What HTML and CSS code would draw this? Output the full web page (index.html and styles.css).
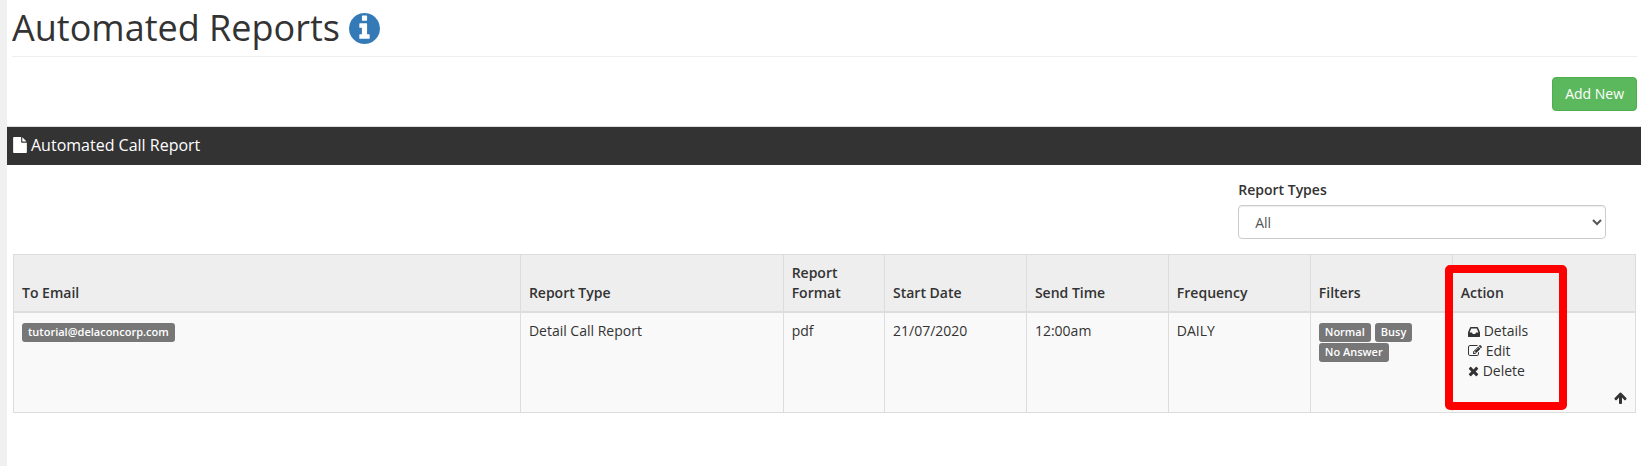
FILE: index.html
```html
<!DOCTYPE html>
<html lang="en">
<head>
    <meta charset="UTF-8">
    <meta name="viewport" content="width=device-width, initial-scale=1.0">
    <title>Automated Reports</title>
    <link rel="stylesheet" href="styles.css">
</head>
<body>
    <main class="page">
        <div class="page-header">
            <h1>Automated Reports</h1>
            <a href="#" class="info-link" aria-label="Help">
                <svg class="icon-info" viewBox="0 128 1536 1536"><path d="M1024 1376v-160q0-14-9-23t-23-9h-96v-512q0-14-9-23t-23-9h-320q-14 0-23 9t-9 23v160q0 14 9 23t23 9h96v320h-96q-14 0-23 9t-9 23v160q0 14 9 23t23 9h448q14 0 23-9t9-23zm-128-896v-192q0-14-9-23t-23-9h-192q-14 0-23 9t-9 23v192q0 14 9 23t23 9h192q14 0 23-9t9-23zm640 416q0 209-103 385.5t-279.5 279.5-385.5 103-385.5-103-279.5-279.5-103-385.5 103-385.5 279.5-279.5 385.5-103 385.5 103 279.5 279.5 103 385.5z"/></svg>
            </a>
        </div>

        <div class="toolbar">
            <button type="button" class="btn-add">Add New</button>
        </div>

        <h2 class="panel-heading">
            <svg class="icon-file" viewBox="0 0 1536 1792"><path d="M1024 512v-472q22 14 36 28l408 408q14 14 28 36h-472zm-128 32q0 40 28 68t68 28h544v1056q0 40-28 68t-68 28h-1344q-40 0-68-28t-28-68v-1600q0-40 28-68t68-28h800v544z"/></svg>
            Automated Call Report
        </h2>

        <div class="filter-bar">
            <div class="form-group">
                <label for="report-types">Report Types</label>
                <select id="report-types" class="form-control">
                    <option>All</option>
                </select>
            </div>
        </div>

        <div class="table-wrap">
            <table class="report-table">
                <colgroup>
                    <col class="col-email">
                    <col class="col-type">
                    <col class="col-format">
                    <col class="col-small">
                    <col class="col-small">
                    <col class="col-small">
                    <col class="col-small">
                    <col>
                </colgroup>
                <thead>
                    <tr>
                        <th>To Email</th>
                        <th>Report Type</th>
                        <th>Report Format</th>
                        <th>Start Date</th>
                        <th>Send Time</th>
                        <th>Frequency</th>
                        <th>Filters</th>
                        <th>Action</th>
                    </tr>
                </thead>
                <tbody>
                    <tr>
                        <td>
                            <div class="tags"><span class="tag">tutorial@delaconcorp.com</span></div>
                        </td>
                        <td>Detail Call Report</td>
                        <td>pdf</td>
                        <td>21/07/2020</td>
                        <td>12:00am</td>
                        <td>DAILY</td>
                        <td>
                            <div class="tags">
                                <span class="tag">Normal</span>
                                <span class="tag">Busy</span>
                                <span class="tag">No Answer</span>
                            </div>
                        </td>
                        <td class="action-cell">
                            <ul class="actions">
                                <li><a href="#"><svg class="icon icon-inbox" viewBox="0 128 1536 1536"><path d="M1023 1088h316q-1-3-2.5-8.5t-2.5-7.5l-212-496h-708l-212 496q-1 3-2.5 8.5t-2.5 7.5h316l95 192h320zm513 30v482q0 26-19 45t-45 19h-1408q-26 0-45-19t-19-45v-482q0-62 25-123l238-552q10-25 36.5-42t52.5-17h832q26 0 52.5 17t36.5 42l238 552q25 61 25 123z"/></svg>Details</a></li>
                                <li><a href="#"><svg class="icon icon-edit" viewBox="0 0 1792 1792"><path d="M888 1184l116-116-152-152-116 116v56h96v96h56zm440-720q-16-16-33 1l-350 350q-17 17-1 33t33-1l350-350q17-17 1-33zm80 594v190q0 119-84.5 203.5t-203.5 84.5h-832q-119 0-203.5-84.5t-84.5-203.5v-832q0-119 84.5-203.5t203.5-84.5h832q63 0 117 25 15 7 18 23 3 17-9 29l-49 49q-14 14-32 8-23-6-45-6h-832q-66 0-113 47t-47 113v832q0 66 47 113t113 47h832q66 0 113-47t47-113v-126q0-13 9-22l64-64q15-15 35-7t20 29zm-96-738l288 288-672 672h-288v-288zm444 132l-92 92-288-288 92-92q28-28 68-28t68 28l152 152q28 28 28 68t-28 68z"/></svg>Edit</a></li>
                                <li><a href="#"><svg class="icon icon-times" viewBox="192 192 1408 1408"><path d="M1490 1322q0 40-28 68l-136 136q-28 28-68 28t-68-28l-294-294-294 294q-28 28-68 28t-68-28l-136-136q-28-28-28-68t28-68l294-294-294-294q-28-28-28-68t28-68l136-136q28-28 68-28t68 28l294 294 294-294q28-28 68-28t68 28l136 136q28 28 28 68t-28 68l-294 294 294 294q28 28 28 68z"/></svg>Delete</a></li>
                            </ul>
                            <div class="back-top">
                                <a href="#" aria-label="Back to top"><svg class="icon-up" viewBox="64 128 1664 1536"><path d="M1675 971q0 51-37 90l-75 75q-38 38-91 38-54 0-90-38l-294-293v704q0 52-37.5 84.5t-90.5 32.5h-128q-53 0-90.5-32.5t-37.5-84.5v-704l-294 293q-36 38-90 38t-90-38l-75-75q-38-38-38-90 0-53 38-91l651-651q35-37 90-37 54 0 91 37l651 651q37 39 37 91z"/></svg></a>
                            </div>
                            <div class="highlight"></div>
                        </td>
                    </tr>
                </tbody>
            </table>
        </div>
    </main>
</body>
</html>
```
FILE: styles.css
```css
* {
    box-sizing: border-box;
}
body {
    margin: 0;
    font-family: "Open Sans", Arial, sans-serif;
    font-size: 14px;
    line-height: 20px;
    color: #333;
    background-color: #fff;
}
svg {
    display: block;
    fill: currentColor;
}
a {
    color: #333;
    text-decoration: none;
}
.page {
    min-height: 100vh;
    border-left: 7px solid #f0f0f0;
}
.page-header {
    display: flex;
    align-items: center;
    gap: 9px;
    margin: 0 4px 0 5px;
    padding-bottom: 8px;
    border-bottom: 1px solid #eee;
}
h1 {
    margin: 0;
    padding-top: 8px;
    font-size: 36px;
    font-weight: 400;
    line-height: 40px;
}
.info-link {
    padding-top: 8px;
    color: #337ab7;
}
.icon-info {
    width: 31px;
    height: 31px;
}
.toolbar {
    display: flex;
    justify-content: flex-end;
    padding: 20px 4px 15px;
}
.btn-add {
    padding: 6px 12px;
    border: 1px solid #4cae4c;
    border-radius: 4px;
    background-color: #5cb85c;
    color: #fff;
    font: inherit;
    cursor: pointer;
}
.panel-heading {
    display: flex;
    align-items: center;
    gap: 4px;
    margin: 0;
    padding: 8px 6px 10px;
    border-top: 1px solid #ddd;
    background-color: #333;
    color: #fff;
    font-size: 16px;
    font-weight: 400;
    line-height: 20px;
}
.icon-file {
    width: 14px;
    height: 16px;
}

/* filter */
.filter-bar {
    display: flex;
    justify-content: flex-end;
    padding: 15px 35px 15px 0;
}
.form-group {
    width: 23%;
}
.form-group label {
    display: block;
    margin-bottom: 5px;
    font-weight: 600;
}
.form-control {
    display: block;
    width: 100%;
    height: 34px;
    padding: 6px 12px;
    border: 1px solid #ccc;
    border-radius: 4px;
    background-color: #fff;
    box-shadow: inset 0 1px 1px rgba(0, 0, 0, 0.075);
    color: #555;
    font: inherit;
}

/* table */
.table-wrap {
    padding: 0 5px 0 6px;
}
.report-table {
    width: 100%;
    table-layout: fixed;
    border-collapse: collapse;
    border: 1px solid #ddd;
}
.col-email {
    width: 31.25%;
}
.col-type {
    width: 16.2%;
}
.col-format {
    width: 6.25%;
}
.col-small {
    width: 8.75%;
}
th, td {
    padding: 8px;
    border: 1px solid #ddd;
    text-align: left;
    vertical-align: top;
}
th {
    border-bottom-width: 2px;
    background-color: #eee;
    font-weight: 600;
    vertical-align: bottom;
}
td {
    background-color: #f9f9f9;
}
.tags {
    display: flex;
    flex-wrap: wrap;
    gap: 1px 4px;
    padding-top: 2px;
}
.tag {
    padding: 1px 6px 3px;
    border-radius: 3px;
    background-color: #777;
    color: #fff;
    font-size: 11px;
    font-weight: 600;
    line-height: 15px;
}
.action-cell {
    position: relative;
}
.actions {
    margin: 0;
    padding: 0 0 0 7px;
    list-style: none;
}
.actions a {
    display: flex;
    align-items: center;
    gap: 4px;
}
.icon {
    height: 12px;
}
.icon-inbox {
    width: 12px;
}
.icon-edit {
    width: 14px;
    height: 14px;
}
.icon-times {
    width: 11px;
}
.back-top {
    display: flex;
    justify-content: flex-end;
    padding-top: 11px;
}
.icon-up {
    width: 13px;
    height: 12px;
}
/* frame drawn over the action column */
.highlight {
    position: absolute;
    top: -48px;
    left: -8px;
    width: 122px;
    height: 145px;
    border: 8px solid #f00;
    border-radius: 5px;
}
```
